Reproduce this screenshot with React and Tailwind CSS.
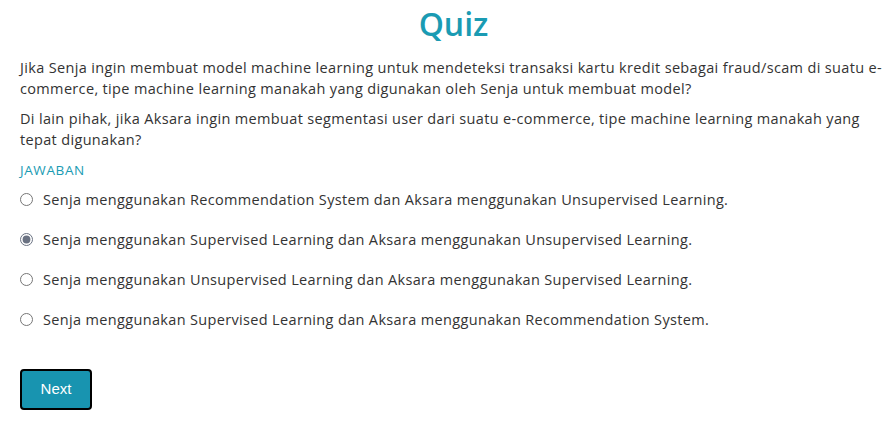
import React, { useState } from 'react'

const OPTIONS = [
  'Senja menggunakan Recommendation System dan Aksara menggunakan Unsupervised Learning.',
  'Senja menggunakan Supervised Learning dan Aksara menggunakan Unsupervised Learning.',
  'Senja menggunakan Unsupervised Learning dan Aksara menggunakan Supervised Learning.',
  'Senja menggunakan Supervised Learning dan Aksara menggunakan Recommendation System.',
]

export default function App(){
  const [answer, setAnswer] = useState(1)

  return (
    <div className="w-[893px] h-[432px] bg-white px-5 text-[#333] font-['Open_Sans',sans-serif]">
      <h1 className="text-center text-[32px] leading-[40px] pt-[4px] pl-[14px] text-[#1a9bb3] font-[550]">Quiz</h1>
      <div className="mt-[13px] text-[14.5px] leading-[21px] tracking-[0.34px] whitespace-nowrap">
        <p>Jika Senja ingin membuat model machine learning untuk mendeteksi transaksi kartu kredit sebagai fraud/scam di suatu e-<br/>commerce, tipe machine learning manakah yang digunakan oleh Senja untuk membuat model?</p>
        <p className="mt-[9px]">Di lain pihak, jika Aksara ingin membuat segmentasi user dari suatu e-commerce, tipe machine learning manakah yang<br/>tepat digunakan?</p>
      </div>
      <div className="mt-[10px] text-[13.5px] leading-[20px] text-[#1a9bb3] tracking-[0.6px]">JAWABAN</div>
      <div className="mt-[9px] flex flex-col gap-[19px]">
        {OPTIONS.map((opt, idx) => (
          <label key={idx} className="flex items-center h-[21px] text-[14.5px] tracking-[0.34px]">
            <input
              type="radio"
              name="jawaban"
              checked={answer === idx}
              onChange={()=>setAnswer(idx)}
              className="ml-0 mr-[10px] w-[13px] h-[13px] accent-gray-500"
            />
            <span>{opt}</span>
          </label>
        ))}
      </div>
      <button className="mt-[39px] w-[72px] h-[41px] rounded border-2 border-black bg-[#1894b0] text-white text-[15px] font-['Liberation_Sans',sans-serif]">Next</button>
    </div>
  )
}
